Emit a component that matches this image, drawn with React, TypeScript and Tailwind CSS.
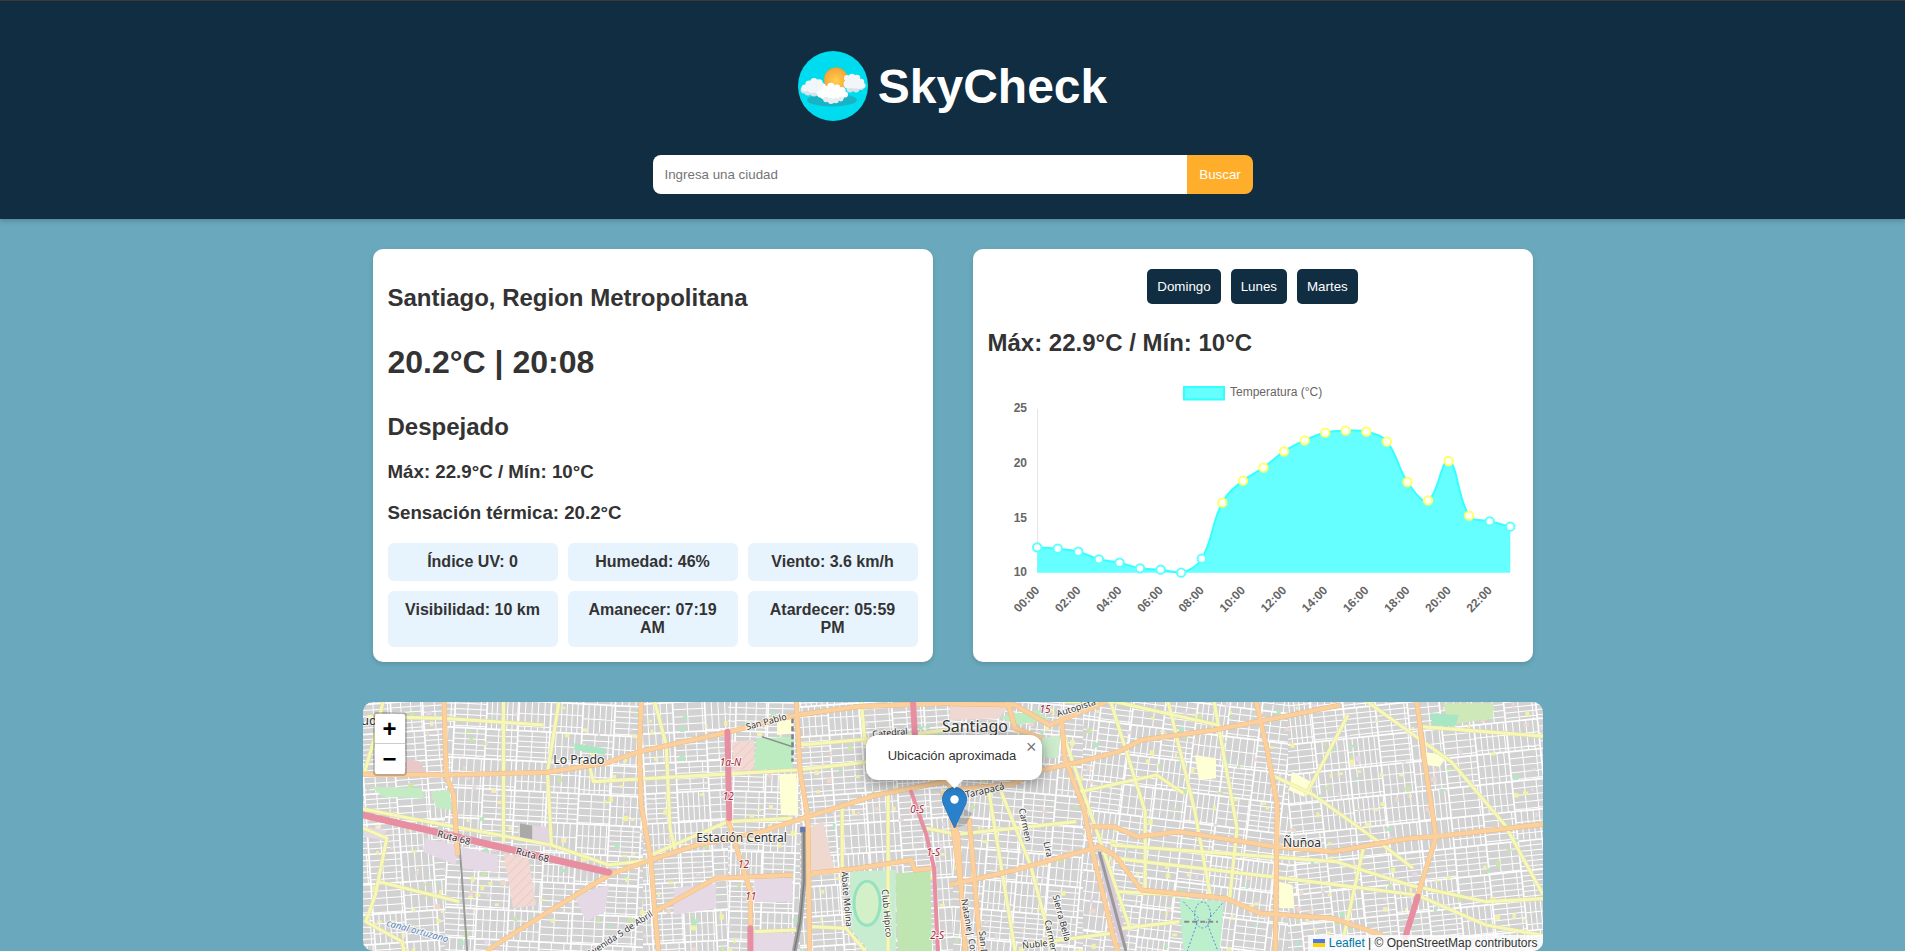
import { useMemo } from "react";

const temps = [
  922, 926, 935, 958, 968, 985, 989, 998, 956, 788, 722, 683, 634, 601, 578, 572,
  575, 605, 726, 781, 663, 827, 844, 860,
];

const stats = [
  "Índice UV: 0",
  "Humedad: 46%",
  "Viento: 3.6 km/h",
  "Visibilidad: 10 km",
  "Amanecer: 07:19 AM",
  "Atardecer: 05:59 PM",
];

// map coords come from two traced crops, left and right half
const lx = (x: number) => x / 2.613 - 3;
const rx = (x: number) => 587 + x / 2.613;
const my = (y: number) => y / 3 - 7;

const toPath = (side: "L" | "R", pts: number[]) => {
  const fx = side === "L" ? lx : rx;
  let d = "";
  for (let i = 0; i < pts.length; i += 2) {
    d += `${i === 0 ? "M" : "L"}${fx(pts[i]).toFixed(1)} ${my(pts[i + 1]).toFixed(1)}`;
  }
  return d;
};

const orange: ["L" | "R", number[]][] = [
  ["L", [0, 238, 220, 240, 490, 232, 640, 205, 730, 170, 960, 112, 1140, 60, 1300, 35, 1450, 28, 1568, 24]],
  ["R", [0, 26, 170, 30, 260, 90, 410, 20]],
  ["L", [330, 768, 450, 680, 650, 540, 760, 495, 880, 450, 1050, 410, 1170, 365, 1350, 300, 1520, 262, 1568, 255]],
  ["R", [0, 285, 160, 268, 240, 225, 340, 200, 440, 170, 500, 135, 690, 105, 870, 65, 1020, 30]],
  ["L", [220, 20, 225, 240, 245, 300, 255, 480]],
  ["L", [735, 20, 730, 170, 735, 330, 760, 495, 770, 650, 780, 768]],
  ["L", [960, 370, 1020, 590, 1020, 710]],
  ["L", [1140, 20, 1150, 230, 1170, 365, 1175, 768]],
  ["L", [770, 650, 930, 550, 1130, 540]],
  ["L", [1180, 535, 1300, 520, 1440, 495, 1450, 525, 1495, 520]],
  ["L", [1540, 260, 1550, 400, 1568, 560]],
  ["R", [-20, 290, 20, 420, 40, 768]],
  ["R", [50, 370, 80, 768]],
  ["R", [290, 60, 300, 190, 350, 340, 370, 460, 430, 740, 440, 768]],
  ["R", [370, 395, 430, 395, 490, 425, 600, 410, 850, 455, 1000, 470, 1200, 430, 1270, 425, 1568, 385]],
  ["R", [0, 570, 170, 525, 390, 455, 430, 480, 500, 585, 720, 610, 810, 655, 1000, 670, 1130, 720]],
  ["R", [800, 20, 830, 170, 855, 330, 850, 768]],
  ["R", [1220, 20, 1240, 200, 1270, 425, 1220, 610]],
  ["R", [150, 20, 170, 100, 240, 130]],
];

const yellow: ["L" | "R", number[]][] = [
  ["L", [0, 340, 130, 370, 500, 450, 650, 510, 760, 495]],
  ["L", [375, 20, 375, 440]],
  ["L", [490, 232, 500, 450]],
  ["L", [520, 20, 490, 232]],
  ["L", [60, 20, 40, 120, 10, 240]],
  ["L", [600, 215, 610, 260, 1140, 225, 1568, 170]],
  ["L", [770, 20, 800, 150, 810, 400, 825, 470]],
  ["L", [760, 480, 960, 380, 1130, 370]],
  ["L", [1260, 340, 1260, 540]],
  ["L", [1380, 300, 1380, 768]],
  ["L", [1310, 20, 1320, 150]],
  ["L", [0, 395, 70, 430, 40, 600, 15, 680, 110, 740, 115, 768]],
  ["L", [50, 560, 260, 620]],
  ["L", [20, 65, 220, 70, 480, 90]],
  ["L", [1150, 150, 1400, 125, 1568, 100]],
  ["L", [1030, 710, 1140, 705]],
  ["L", [1180, 695, 1270, 700, 1320, 768]],
  ["L", [1480, 400, 1568, 420]],
  ["R", [100, 280, 170, 768]],
  ["R", [130, 280, 210, 510, 270, 768]],
  ["R", [420, 20, 510, 350, 510, 600]],
  ["R", [570, 20, 640, 350, 680, 600]],
  ["R", [690, 20, 750, 400, 730, 620]],
  ["R", [290, 100, 390, 430, 470, 700]],
  ["R", [340, 290, 540, 240, 610, 295]],
  ["R", [1090, 20, 1310, 200, 1450, 390, 1550, 600]],
  ["R", [420, 450, 1010, 500, 1200, 570, 1400, 620, 1568, 610]],
  ["R", [430, 490, 840, 545, 1220, 600, 1400, 690, 1568, 725]],
  ["R", [0, 420, 330, 380]],
  ["R", [1230, 95, 1568, 125]],
  ["R", [300, 20, 430, 20, 700, 90]],
  ["R", [840, 240, 950, 300, 1120, 440, 1210, 520]],
  ["R", [1040, 60, 930, 300]],
  ["R", [1080, 460, 1030, 720]],
  ["R", [440, 590, 600, 600]],
  ["R", [450, 700, 600, 680]],
  ["R", [190, 750, 420, 715]],
];

const zones = [
  { x0: 0, x1: 82, a: -4 },
  { x0: 82, x1: 280, a: 3 },
  { x0: 280, x1: 365, a: -3 },
  { x0: 365, x1: 437, a: 2 },
  { x0: 437, x1: 590, a: -4 },
  { x0: 590, x1: 720, a: 5 },
  { x0: 720, x1: 925, a: 7 },
  { x0: 925, x1: 1180, a: -6 },
];

const makeRand = (seed: number) => () => {
  seed = (seed + 0x6d2b79f5) | 0;
  let t = Math.imul(seed ^ (seed >>> 15), 1 | seed);
  t = (t + Math.imul(t ^ (t >>> 7), 61 | t)) ^ t;
  return ((t ^ (t >>> 14)) >>> 0) / 4294967296;
};

const StreetMap = () => {
  const { zoneStreets, spots } = useMemo(() => {
    const rand = makeRand(68);
    const zoneStreets = zones.map((z) => {
      let thin = "";
      let wide = "";
      for (let cx = z.x0 - 60; cx < z.x1 + 60; cx += 32) {
        for (let cy = -60; cy < 310; cy += 30) {
          wide += `M${cx} ${cy}h32M${cx} ${cy}v30`;
          const horizontal = rand() > 0.4;
          const step = 5 + rand() * 2.5;
          const cross = 10 + rand() * 5;
          if (horizontal) {
            for (let y = cy + step; y < cy + 29; y += step) thin += `M${cx} ${y.toFixed(1)}h32`;
            for (let x = cx + cross; x < cx + 31; x += cross) thin += `M${x.toFixed(1)} ${cy}v30`;
          } else {
            for (let x = cx + step; x < cx + 31; x += step) thin += `M${x.toFixed(1)} ${cy}v30`;
            for (let y = cy + cross; y < cy + 29; y += cross) thin += `M${cx} ${y.toFixed(1)}h32`;
          }
        }
      }
      return { ...z, thin, wide };
    });
    const palette = ["#f3f3a6", "#f3f3a6", "#b5e8c2", "#efd9cf", "#f6f0b8", "#c9e8a8", "#e6d8e4"];
    const spots = Array.from({ length: 520 }, () => ({
      x: rand() * 1180,
      y: rand() * 249,
      w: 2 + rand() * 3.5,
      h: 2 + rand() * 3.5,
      c: palette[Math.floor(rand() * palette.length)],
    }));
    return { zoneStreets, spots };
  }, []);

  const poly = (side: "L" | "R", pts: number[], fill: string) => (
    <path d={toPath(side, pts) + "Z"} fill={fill} />
  );

  const label = (
    text: string,
    x: number,
    y: number,
    size: number,
    rotate = 0,
    color = "#333",
    italic = false,
  ) => (
    <text
      x={x}
      y={y}
      fontSize={size}
      fill={color}
      fontStyle={italic ? "italic" : "normal"}
      textAnchor="middle"
      dominantBaseline="middle"
      stroke="#fff"
      strokeOpacity={0.75}
      strokeWidth={2}
      paintOrder="stroke"
      transform={rotate ? `rotate(${rotate} ${x} ${y})` : undefined}
      className="font-['Noto_Sans',sans-serif]"
    >
      {text}
    </text>
  );

  return (
    <svg viewBox="0 0 1180 249" className="block h-full w-full">
      <defs>
        <pattern id="hatch" width="7" height="7" patternUnits="userSpaceOnUse" patternTransform="rotate(-45)">
          <rect width="7" height="7" fill="#f3d9d3" />
          <line x1="0" y1="0" x2="7" y2="0" stroke="#e8bdb5" strokeWidth="1" />
        </pattern>
        {zones.map((z, i) => (
          <clipPath id={`zone${i}`} key={i}>
            <rect x={z.x0} y={0} width={z.x1 - z.x0} height={249} />
          </clipPath>
        ))}
      </defs>
      <rect width="1180" height="249" fill="#d2d2d2" />
      {zoneStreets.map((z, i) => (
        <g key={i} clipPath={`url(#zone${i})`}>
          <g transform={`rotate(${z.a} ${(z.x0 + z.x1) / 2} 125)`} fill="none" stroke="#fff">
            <path d={z.thin} strokeWidth="1" />
            <path d={z.wide} strokeWidth="1.7" />
          </g>
        </g>
      ))}
      {spots.map((s, i) => (
        <rect key={i} x={s.x} y={s.y} width={s.w} height={s.h} fill={s.c} />
      ))}

      {/* land use */}
      {poly("L", [10, 395, 70, 405, 60, 435, 10, 425], "#e6d9e6")}
      {poly("L", [170, 430, 250, 450, 250, 510, 165, 470], "#e6d9e6")}
      {poly("L", [265, 455, 360, 480, 360, 530, 265, 520], "#e6d9e6")}
      {poly("L", [375, 475, 440, 490, 460, 630, 400, 640], "url(#hatch)")}
      {poly("L", [415, 385, 495, 400, 495, 460, 415, 430], "#e3d6e3")}
      {poly("L", [418, 385, 450, 392, 450, 440, 418, 428], "#a9a9a9")}
      {poly("L", [560, 600, 650, 570, 640, 650, 590, 680], "#e6d9e6")}
      {poly("L", [820, 580, 930, 565, 930, 640, 820, 660], "#e6d9e6")}
      {poly("L", [1030, 550, 1130, 550, 1130, 620, 1030, 620], "#e6d9e6")}
      {poly("L", [1025, 710, 1135, 715, 1130, 768, 1025, 768], "#e6d9e6")}
      {poly("L", [120, 190, 160, 200, 170, 235, 120, 235], "#e8c9c9")}
      {poly("L", [30, 275, 160, 280, 170, 310, 60, 305], "#c4ecc4")}
      {poly("L", [185, 290, 235, 285, 240, 345, 200, 340], "#c4ecc4")}
      {poly("L", [560, 145, 640, 160, 640, 180, 560, 165], "#a8e6c4")}
      {poly("L", [975, 140, 1030, 135, 1030, 225, 975, 228], "url(#hatch)")}
      {poly("L", [1035, 130, 1135, 125, 1130, 220, 1030, 225], "#bcecc0")}
      {poly("L", [1090, 75, 1135, 70, 1130, 115, 1090, 120], "#ffffd6")}
      {poly("L", [1095, 240, 1140, 235, 1145, 360, 1100, 360], "#ffffd6")}
      {poly("L", [1280, 530, 1400, 525, 1400, 768, 1330, 768, 1280, 700], "#c8ecd0")}
      {poly("L", [1400, 535, 1490, 530, 1495, 768, 1405, 768], "#bfe6b0")}
      <ellipse cx={lx(1325)} cy={my(625)} rx="13" ry="22" fill="#d3f0c8" stroke="#97e2be" strokeWidth="3" />
      {poly("L", [1170, 400, 1210, 380, 1240, 530, 1180, 535], "#efd8d0")}
      {poly("R", [0, 30, 150, 30, 130, 70, 0, 75], "#f0d8d2")}
      {poly("R", [130, 65, 230, 45, 260, 75, 170, 90], "#bcecc0")}
      {poly("R", [240, 130, 290, 120, 280, 190, 240, 185], "#cdeccd")}
      {poly("R", [640, 180, 695, 190, 695, 250, 650, 255], "#ffffd6")}
      {poly("R", [895, 230, 950, 265, 925, 305, 885, 285], "#ffffd6")}
      {poly("R", [860, 560, 895, 570, 900, 640, 860, 640], "#ffffd6")}
      {poly("R", [600, 610, 715, 620, 705, 768, 610, 768], "#bcf0cc")}
      {poly("R", [1290, 25, 1420, 25, 1420, 70, 1300, 90], "#cfe8b8")}
      {poly("R", [1255, 55, 1330, 60, 1320, 95, 1260, 90], "#a8e6c4")}
      {poly("R", [385, 480, 405, 480, 465, 740, 440, 740], "#d9cbdc")}
      {poly("R", [1230, 170, 1300, 180, 1280, 215, 1240, 210], "#ffffd6")}
      <path d={toPath("R", [612, 680, 700, 680])} stroke="#8a8a8a" strokeWidth="2" strokeDasharray="5 3" fill="none" />
      <path d={toPath("R", [610, 620, 650, 670, 620, 768])} stroke="#4a6ae0" strokeWidth="0.8" strokeDasharray="2 2" fill="none" />
      <path d={toPath("R", [712, 625, 670, 680, 700, 768])} stroke="#4a6ae0" strokeWidth="0.8" strokeDasharray="2 2" fill="none" />
      <ellipse cx={rx(660)} cy={my(660)} rx="8" ry="13" fill="none" stroke="#4a6ae0" strokeWidth="0.8" strokeDasharray="2 2" />

      {/* rail */}
      <path d={toPath("L", [1160, 400, 1160, 560, 1150, 680, 1135, 768])} stroke="#a2a2a2" strokeWidth="5" fill="none" />
      <path d={toPath("L", [1160, 400, 1160, 560, 1150, 680, 1135, 768])} stroke="#7c7c7c" strokeWidth="1.5" fill="none" />
      <path d={toPath("L", [1150, 395, 1172, 395, 1172, 412, 1150, 412]) + "Z"} fill="#6878ae" />
      <path d={toPath("L", [1130, 70, 1130, 200])} stroke="#7f7f8f" strokeWidth="2.5" strokeDasharray="5 3" fill="none" />
      <path d={toPath("L", [1050, 125, 1130, 155])} stroke="#8f8f8f" strokeWidth="1.5" fill="none" />
      <path d={toPath("L", [245, 300, 262, 480, 280, 768])} stroke="#999" strokeWidth="2" fill="none" />
      <path d={toPath("R", [390, 470, 460, 768])} stroke="#999" strokeWidth="3" fill="none" />

      {/* roads */}
      {yellow.map(([side, pts], i) => (
        <path key={i} d={toPath(side, pts)} fill="none" stroke="#dcdc9c" strokeWidth="4" strokeLinejoin="round" />
      ))}
      {yellow.map(([side, pts], i) => (
        <path key={i} d={toPath(side, pts)} fill="none" stroke="#f7f8b8" strokeWidth="3.2" strokeLinejoin="round" />
      ))}
      {orange.map(([side, pts], i) => (
        <path key={i} d={toPath(side, pts)} fill="none" stroke="#ecb980" strokeWidth="5" strokeLinejoin="round" />
      ))}
      {orange.map(([side, pts], i) => (
        <path key={i} d={toPath(side, pts)} fill="none" stroke="#fbd09d" strokeWidth="4.2" strokeLinejoin="round" />
      ))}
      {[
        toPath("L", [0, 358, 250, 425, 650, 532]),
        toPath("L", [960, 110, 965, 370]),
        toPath("L", [1020, 700, 1020, 768]),
        toPath("L", [1445, 20, 1450, 120]),
        toPath("L", [1440, 290, 1480, 420, 1500, 520, 1510, 768]),
        toPath("R", [1222, 605, 1190, 725]),
      ].map((d, i) => (
        <path key={i} d={d} fill="none" stroke="#e78ea1" strokeWidth={i === 0 ? 7 : i === 4 ? 4 : 6} strokeLinecap="round" strokeLinejoin="round" />
      ))}

      {/* names */}
      {label("ud", 6, 20, 13)}
      {label("San Pablo", lx(1062), my(82), 9, -15)}
      {label("Catedral", lx(1385), my(115), 9, -5)}
      {label("Santiago", 612, 26, 16)}
      {label("Lo Prado", lx(572), my(198), 12.3)}
      {label("Ruta 68", lx(245), my(430), 9.5, 15)}
      {label("Ruta 68", lx(450), my(482), 9.5, 15)}
      {label("Estación Central", lx(997), my(430), 12)}
      {label("Ñuñoa", rx(920), my(446), 12)}
      {label("Abate Molina", lx(1270), my(612), 9, 85)}
      {label("Club Hípico", lx(1375), my(655), 9, 85)}
      {label("Avenida 5 de Abril", lx(680), my(718), 9, -33)}
      {label("canal ortuzano", lx(150), my(710), 9.5, 15, "#5a84bb", true)}
      {label("Tarapacá", 622, 89, 9.5, -13)}
      {label("Carmen", rx(195), my(390), 9, 78)}
      {label("Lira", rx(255), my(463), 9, 78)}
      {label("Sierra Bella", rx(290), my(670), 9, 75)}
      {label("Carmen", rx(262), my(725), 9, 78)}
      {label("Natanie| Cox", rx(48), my(695), 9, 80)}
      {label("San D", rx(85), my(745), 9, 85)}
      {label("Ñuble", rx(222), my(750), 9, -6)}
      {label("Autopista", rx(330), my(40), 9, -18)}
      {label("1a-N", lx(968), my(204), 10, 0, "#a32a3c", true)}
      {label("12", lx(962), my(308), 10, 0, "#a32a3c", true)}
      {label("12", lx(1002), my(510), 10, 0, "#a32a3c", true)}
      {label("11", lx(1021), my(608), 10, 0, "#a32a3c", true)}
      {label("0-S", lx(1456), my(346), 10, 0, "#a32a3c", true)}
      {label("1-S", lx(1498), my(474), 10, 0, "#a32a3c", true)}
      {label("2-S", lx(1508), my(724), 10, 0, "#a32a3c", true)}
      {label("15", rx(248), my(45), 10, 0, "#a32a3c", true)}
    </svg>
  );
};

const Chart = () => {
  const pts = temps.map((y, i) => ({ x: 1037.2 + i * 20.57, y: 240 + y / 3, hot: i >= 9 && i <= 21 }));
  let line = `M${pts[0].x} ${pts[0].y}`;
  const ctrl = pts.map((p, i) => {
    const a = pts[Math.max(i - 1, 0)];
    const b = pts[Math.min(i + 1, pts.length - 1)];
    const d1 = Math.hypot(p.x - a.x, p.y - a.y);
    const d2 = Math.hypot(b.x - p.x, b.y - p.y);
    const sum = d1 + d2 || 1;
    return {
      px: p.x - (0.4 * d1 * (b.x - a.x)) / sum,
      py: p.y - (0.4 * d1 * (b.y - a.y)) / sum,
      nx: p.x + (0.4 * d2 * (b.x - a.x)) / sum,
      ny: p.y + (0.4 * d2 * (b.y - a.y)) / sum,
    };
  });
  for (let i = 1; i < pts.length; i++) {
    line += `C${ctrl[i - 1].nx} ${Math.min(ctrl[i - 1].ny, 572.7)} ${ctrl[i].px} ${Math.min(ctrl[i].py, 572.7)} ${pts[i].x} ${pts[i].y}`;
  }
  const last = pts[pts.length - 1];

  return (
    <svg viewBox="988 375 530 272" className="mt-[19px] block h-[272px] w-[530px]">
      <rect x="1184" y="387" width="40" height="12.5" fill="#66ffff" stroke="#33ffff" strokeWidth="2" />
      <text x="1230" y="396" fontSize="12" fill="#666">
        Temperatura (°C)
      </text>
      <line x1="1037.5" y1="409" x2="1037.5" y2="573" stroke="#e5e5e5" />
      {[
        ["25", 411.5],
        ["20", 467],
        ["15", 522],
        ["10", 576],
      ].map(([t, y]) => (
        <text key={t} x="1027" y={y} fontSize="12" fontWeight="700" fill="#666" textAnchor="end">
          {t}
        </text>
      ))}
      <path d={`${line}L${last.x} 572.7L${pts[0].x} 572.7Z`} fill="#66ffff" />
      <path d={line} fill="none" stroke="#33ffff" strokeWidth="2" />
      {pts.map((p, i) => (
        <circle key={i} cx={p.x} cy={p.y} r="4.2" fill="#fff" stroke={p.hot ? "#ffff66" : "#5cffff"} strokeWidth="2" />
      ))}
      {pts.map((p, i) =>
        i % 2 === 0 ? (
          <text
            key={i}
            x={p.x + 3}
            y={591}
            fontSize="12"
            fontWeight="700"
            fill="#666"
            textAnchor="end"
            transform={`rotate(-46 ${p.x + 3} 591)`}
          >
            {String(i).padStart(2, "0")}:00
          </text>
        ) : null,
      )}
    </svg>
  );
};

const puffs = (list: number[][], fill: string) =>
  list.map(([x, y, r], i) => <circle key={i} cx={x} cy={y} r={r} fill={fill} />);

const Logo = () => (
  <svg viewBox="0 0 70 70" className="h-[70px] w-[70px]">
    <defs>
      <radialGradient id="sun" cx="50%" cy="55%" r="55%">
        <stop offset="0%" stopColor="#ffd04d" />
        <stop offset="100%" stopColor="#f7a335" />
      </radialGradient>
    </defs>
    <circle cx="35" cy="35" r="35" fill="#00dcef" />
    <ellipse cx="34" cy="49" rx="25" ry="6.5" fill="#18b4c6" />
    <circle cx="38" cy="28" r="12.5" fill="#38cdb0" />
    <circle cx="38" cy="28.5" r="11.7" fill="url(#sun)" />
    {puffs(
      [
        [6, 39, 3.4],
        [10, 41, 3.6],
        [16, 42, 3.6],
        [22, 42, 3.6],
        [52, 38, 3.4],
        [58, 38, 3.4],
        [63, 36, 3],
      ],
      "#d5e2ea",
    )}
    {puffs(
      [
        [7, 37, 3.4],
        [11, 33, 3.6],
        [16, 30.5, 3.6],
        [21, 32, 3.8],
        [24, 36, 4],
        [14, 37, 5],
        [20, 39, 4],
        [49, 27, 3],
        [54, 26, 3.2],
        [59, 27, 3.2],
        [63, 31, 3.2],
        [65, 34.5, 2.6],
        [56, 32, 5.5],
        [50, 33, 4.5],
        [61, 35, 3],
      ],
      "#f3f6f8",
    )}
    {puffs(
      [
        [23, 43, 3.8],
        [27, 38, 3.6],
        [33, 35.5, 3.8],
        [39, 37, 3.4],
        [44, 39.5, 3.6],
        [47, 43.5, 3],
        [34, 44, 8],
        [26, 45, 3.4],
        [42, 45.5, 4],
      ],
      "#fff",
    )}
    {puffs(
      [
        [28, 48.5, 2.8],
        [33, 50, 3],
        [38, 49.5, 2.8],
        [43, 48, 2.4],
      ],
      "#e6edf2",
    )}
  </svg>
);

export default function App() {
  return (
    <div className="min-h-[951px] bg-[#6aa9bd] font-['Liberation_Sans',Arial,sans-serif] text-[#333]">
      <header className="flex h-[219px] flex-col items-center border-t border-[#3a3a38] bg-[#102d41] shadow-[0_2px_5px_rgba(0,0,0,0.2)]">
        <div className="mt-[50px] flex items-center gap-[10px]">
          <Logo />
          <h1 className="text-[48px] font-bold leading-[55px] text-white">SkyCheck</h1>
        </div>
        <form className="mt-[34px] flex h-[39px] w-[600px] overflow-hidden rounded-[8px]">
          <input
            placeholder="Ingresa una ciudad"
            className="min-w-0 flex-1 bg-white px-[12px] text-[13.33px] outline-none placeholder:text-[#757575]"
          />
          <button type="button" className="w-[66px] bg-[#ffae2c] pl-[1px] text-[13.33px] text-white">
            Buscar
          </button>
        </form>
      </header>

      <main className="mt-[30px] flex justify-center gap-[40px]">
        <section className="h-[413px] w-[560px] rounded-[10px] bg-white p-[15px] shadow-[0_2px_5px_rgba(0,0,0,0.15)]">
          <h2 className="mt-[20px] text-[24px] font-bold leading-[27px]">Santiago, Region Metropolitana</h2>
          <p className="mt-[33px] text-[32px] font-bold leading-[37px]">20.2°C | 20:08</p>
          <h2 className="mt-[32px] text-[24px] font-bold leading-[27px]">Despejado</h2>
          <h3 className="mt-[21px] text-[18.72px] font-bold leading-[21px]">Máx: 22.9°C / Mín: 10°C</h3>
          <h3 className="mt-[20px] text-[18.72px] font-bold leading-[21px]">Sensación térmica: 20.2°C</h3>
          <div className="mt-[20px] grid grid-cols-3 gap-[10px]">
            {stats.map((s) => (
              <div key={s} className="rounded-[6px] bg-[#e8f4fd] p-[10px] text-center text-[16px] font-bold leading-[18px]">
                {s}
              </div>
            ))}
          </div>
        </section>

        <section className="h-[413px] w-[560px] rounded-[10px] bg-white px-[15px] pt-[20px] shadow-[0_2px_5px_rgba(0,0,0,0.15)]">
          <div className="flex justify-center gap-[10px]">
            {["Domingo", "Lunes", "Martes"].map((d) => (
              <button key={d} type="button" className="h-[35px] rounded-[5px] bg-[#102d41] px-[10px] text-[13.33px] text-white">
                {d}
              </button>
            ))}
          </div>
          <h2 className="mt-[25px] text-[24px] font-bold leading-[27px]">Máx: 22.9°C / Mín: 10°C</h2>
          <Chart />
        </section>
      </main>

      <div className="relative mx-auto mt-[40px] h-[249px] w-[1180px] overflow-hidden rounded-[10px]">
        <StreetMap />

        <div className="absolute left-[10px] top-[10px] w-[34px] rounded-[4px] border-2 border-[rgba(0,0,0,0.2)] bg-clip-padding">
          <div className="flex h-[30px] items-center justify-center rounded-t-[2px] border-b border-[#ccc] bg-white text-[24px] font-bold leading-none text-black">
            +
          </div>
          <div className="flex h-[30px] items-center justify-center rounded-b-[2px] bg-white text-[24px] font-bold leading-none text-black">
            −
          </div>
        </div>

        <svg viewBox="0 0 36 41" className="absolute left-[579px] top-[85px] h-[41px] w-[36px]">
          <path d="M14 18 L30 26 L24 38 L12 41Z" fill="#000" opacity="0.18" />
          <path d="M12.5 0.5C5.6 0.5 0.5 5.8 0.5 12.5C0.5 15.5 1.5 18 3 20.5L12.5 41L22 20.5C23.5 18 24.5 15.5 24.5 12.5C24.5 5.8 19.4 0.5 12.5 0.5Z" fill="#2a81cb" stroke="#2676b8" />
          <circle cx="12.5" cy="12.5" r="4.2" fill="#fff" />
        </svg>

        <div className="absolute left-[503px] top-[33px] flex h-[45px] w-[176px] items-center justify-center rounded-[12px] bg-white pb-[3px] pr-[3px] text-[13px] text-[#333] shadow-[0_3px_14px_rgba(0,0,0,0.4)]">
          Ubicación aproximada
          <span className="absolute right-[5px] top-[3px] text-[18px] leading-[18px] text-[#757575]">×</span>
        </div>
        <div className="absolute left-[583px] top-[66px] h-[17px] w-[17px] rotate-45 bg-white" />

        <div className="absolute bottom-0 right-0 flex h-[16px] items-center gap-[4px] bg-[rgba(255,255,255,0.8)] px-[5px] text-[12px] leading-[16px] text-[#333]">
          <svg viewBox="0 0 12 8" className="h-[8px] w-[12px]">
            <rect width="12" height="4" fill="#4c7be1" />
            <rect y="4" width="12" height="4" fill="#ffd500" />
          </svg>
          <span>
            <span className="text-[#0078a8]">Leaflet</span> | © OpenStreetMap contributors
          </span>
        </div>
      </div>
    </div>
  );
}
